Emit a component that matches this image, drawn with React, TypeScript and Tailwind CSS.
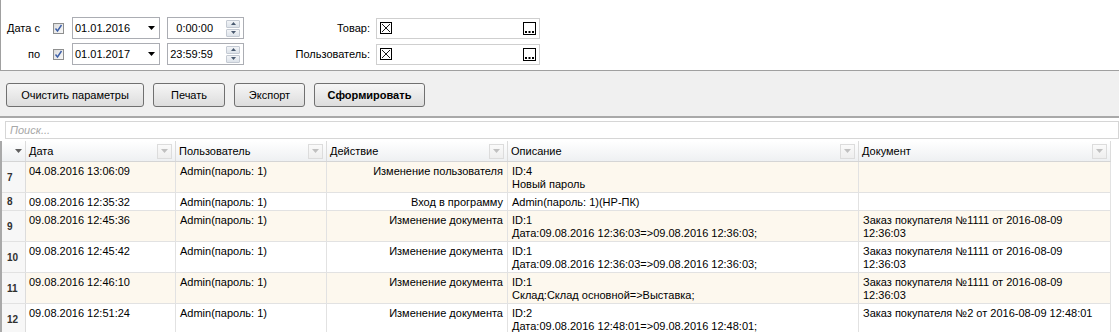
import React from "react";

const FONT = { fontFamily: '"Liberation Sans", Arial, sans-serif' };

const COLS = [
  { key: "date", title: "Дата", w: "w-[150px]" },
  { key: "user", title: "Пользователь", w: "w-[151px]" },
  { key: "action", title: "Действие", w: "w-[181px]" },
  { key: "desc", title: "Описание", w: "w-[351px]" },
  { key: "doc", title: "Документ", w: "w-[252px]" },
];

type Row = {
  n: number;
  date: string;
  user: string;
  action: string;
  desc: string[];
  doc: string[];
};

const DOC1111 = ["Заказ покупателя №1111 от 2016-08-09", "12:36:03"];

const ROWS: Row[] = [
  { n: 7, date: "04.08.2016 13:06:09", user: "Admin(пароль: 1)", action: "Изменение пользователя", desc: ["ID:4", "Новый пароль"], doc: [] },
  { n: 8, date: "09.08.2016 12:35:32", user: "Admin(пароль: 1)", action: "Вход в программу", desc: ["Admin(пароль: 1)(HP-ПК)"], doc: [] },
  { n: 9, date: "09.08.2016 12:45:36", user: "Admin(пароль: 1)", action: "Изменение документа", desc: ["ID:1", "Дата:09.08.2016 12:36:03=>09.08.2016 12:36:03;"], doc: DOC1111 },
  { n: 10, date: "09.08.2016 12:45:42", user: "Admin(пароль: 1)", action: "Изменение документа", desc: ["ID:1", "Дата:09.08.2016 12:36:03=>09.08.2016 12:36:03;"], doc: DOC1111 },
  { n: 11, date: "09.08.2016 12:46:10", user: "Admin(пароль: 1)", action: "Изменение документа", desc: ["ID:1", "Склад:Склад основной=>Выставка;"], doc: DOC1111 },
  { n: 12, date: "09.08.2016 12:51:24", user: "Admin(пароль: 1)", action: "Изменение документа", desc: ["ID:2", "Дата:09.08.2016 12:48:01=>09.08.2016 12:48:01;"], doc: ["Заказ покупателя №2 от 2016-08-09 12:48:01"] },
];

function Check() {
  return (
    <div className="flex h-[11px] w-[11px] items-center justify-center border border-[#8e8f8f] bg-gradient-to-br from-[#dcdcdc] to-[#f8f8f8]">
      <svg width="9" height="9" viewBox="0 0 9 9">
        <path d="M1.5 4.5 L3.5 7 L7.5 1" fill="none" stroke="#3c5fa8" strokeWidth="1.4" />
      </svg>
    </div>
  );
}

function DateBox({ value }: { value: string }) {
  return (
    <div className="flex h-[22px] w-[88px] items-center justify-between border border-[#abadb3] bg-white pl-[2px] pr-[4px]">
      <span>{value}</span>
      <svg width="7" height="4" viewBox="0 0 7 4">
        <path d="M0 0 H7 L3.5 4 Z" fill="#000" />
      </svg>
    </div>
  );
}

function TimeBox({ value }: { value: string }) {
  return (
    <div className="flex h-[22px] w-[77px] items-center border border-[#abadb3] bg-white pr-[3px]">
      <span className="flex-1 pr-[13px] text-right">{value}</span>
      <div className="flex flex-col gap-[1px]">
        <div className="flex h-[8px] w-[14px] items-center justify-center rounded-[1px] border border-[#c4cad3] bg-gradient-to-b from-[#f2f4f7] to-[#dde3ea]">
          <svg width="5" height="3" viewBox="0 0 5 3"><path d="M0 3 H5 L2.5 0 Z" fill="#4a5a70" /></svg>
        </div>
        <div className="flex h-[8px] w-[14px] items-center justify-center rounded-[1px] border border-[#c4cad3] bg-gradient-to-b from-[#f2f4f7] to-[#dde3ea]">
          <svg width="5" height="3" viewBox="0 0 5 3"><path d="M0 0 H5 L2.5 3 Z" fill="#4a5a70" /></svg>
        </div>
      </div>
    </div>
  );
}

function RefBox() {
  return (
    <div className="flex h-[21px] w-[164px] items-center justify-between border border-[#cfcfcf] bg-white pl-[3px] pr-[3px]">
      <div className="flex h-[12px] w-[12px] items-center justify-center border border-black">
        <svg width="10" height="10" viewBox="0 0 10 10">
          <path d="M1 1 L9 9 M9 1 L1 9" stroke="#000" strokeWidth="0.9" />
        </svg>
      </div>
      <div className="flex h-[13px] w-[13px] items-end justify-center border border-black pb-[1px]">
        <svg width="9" height="2" viewBox="0 0 9 2">
          <rect x="0" y="0" width="2" height="2" fill="#000" />
          <rect x="3.5" y="0" width="2" height="2" fill="#000" />
          <rect x="7" y="0" width="2" height="2" fill="#000" />
        </svg>
      </div>
    </div>
  );
}

function Btn({ label, w, bold }: { label: string; w: string; bold?: boolean }) {
  return (
    <div
      className={`flex h-[24px] ${w} items-center justify-center rounded-[3px] border border-[#707070] bg-gradient-to-b from-[#f6f6f6] to-[#dddddd] ${bold ? "font-bold" : ""}`}
    >
      {label}
    </div>
  );
}

function FilterBtn() {
  return (
    <div className="flex h-[15px] w-[15px] items-center justify-center border border-[#dcdcdc] bg-gradient-to-b from-[#fafafa] to-[#eeeeee]">
      <svg width="7" height="4" viewBox="0 0 7 4"><path d="M0 0 H7 L3.5 4 Z" fill="#c0c0c0" /></svg>
    </div>
  );
}

function Lines({ lines }: { lines: string[] }) {
  return (
    <>
      {lines.map((l, i) => (
        <div key={i} className="h-[13px] whitespace-nowrap leading-[13px]">{l}</div>
      ))}
    </>
  );
}

export default function App() {
  return (
    <div className="h-[332px] w-[1119px] overflow-hidden bg-white text-[11px] leading-[13px] text-black" style={FONT}>
      {/* parameters */}
      <div className="flex h-[71px] border-b border-l border-[#a0a0a0] bg-white pt-[17px]">
        <div className="flex flex-col gap-[4px]">
          <div className="flex h-[22px] items-center">
            <span className="w-[52px] pl-[6px]">Дата с</span>
            <Check />
            <div className="ml-[8px]"><DateBox value="01.01.2016" /></div>
            <div className="ml-[7px]"><TimeBox value="0:00:00" /></div>
          </div>
          <div className="flex h-[22px] items-center">
            <span className="w-[52px] pl-[27px]">по</span>
            <Check />
            <div className="ml-[8px]"><DateBox value="01.01.2017" /></div>
            <div className="ml-[7px]"><TimeBox value="23:59:59" /></div>
          </div>
        </div>
        <div className="ml-[40px] flex flex-col gap-[4px]">
          <div className="flex h-[22px] items-center">
            <span className="w-[92px] pr-[6px] text-right">Товар:</span>
            <RefBox />
          </div>
          <div className="flex h-[22px] items-center">
            <span className="w-[92px] pr-[6px] text-right">Пользователь:</span>
            <RefBox />
          </div>
        </div>
      </div>

      {/* toolbar */}
      <div className="flex h-[45px] gap-[9px] bg-[#f0f0f0] pl-[6px] pt-[12px]">
        <Btn label="Очистить параметры" w="w-[138px]" />
        <Btn label="Печать" w="w-[72px]" />
        <Btn label="Экспорт" w="w-[71px]" />
        <Btn label="Сформировать" w="w-[111px]" bold />
      </div>
      <div className="h-[2px] bg-[#a9a9a9]" />

      {/* search */}
      <div className="bg-white pb-[2px] pl-[5px] pt-[3px]">
        <div className="flex h-[18px] items-center border border-[#d6d6d6] pl-[4px] italic text-[#a8a8a8]">Поиск...</div>
      </div>

      {/* grid */}
      <div className="w-[1111px] border-l-2 border-[#a9a9a9]">
        <div className="flex h-[21px] border-b border-[#d5d5d5] bg-gradient-to-b from-[#ffffff] to-[#eef0f2]">
          <div className="flex w-[24px] items-center justify-end border-r border-[#dcdcdc] pr-[3px]">
            <svg width="7" height="4" viewBox="0 0 7 4"><path d="M0 0 H7 L3.5 4 Z" fill="#606060" /></svg>
          </div>
          {COLS.map((c) => (
            <div key={c.key} className={`flex ${c.w} items-center justify-between border-r border-[#dcdcdc] pl-[3px] pr-[3px]`}>
              <span>{c.title}</span>
              <FilterBtn />
            </div>
          ))}
        </div>
        {ROWS.map((r, i) => {
          const two = r.desc.length > 1;
          return (
            <div
              key={r.n}
              className={`flex ${two ? "h-[31px]" : "h-[18px]"} border-b border-[#e2e2e2] ${i % 2 === 0 ? "bg-[#fdf8ee]" : "bg-white"}`}
            >
              <div className="flex w-[24px] items-center border-r border-[#dcdcdc] bg-[#f7f7f7] pl-[5px] text-[10px] font-bold text-[#303030]">
                {r.n}
              </div>
              <div className="w-[150px] border-r border-[#e2e2e2] pl-[3px] pt-[3px]">
                <Lines lines={[r.date]} />
              </div>
              <div className="w-[151px] border-r border-[#e2e2e2] pl-[4px] pt-[3px]">
                <Lines lines={[r.user]} />
              </div>
              <div className="w-[181px] border-r border-[#e2e2e2] pr-[4px] pt-[3px] text-right">
                <Lines lines={[r.action]} />
              </div>
              <div className="w-[351px] border-r border-[#e2e2e2] pl-[4px] pt-[3px]">
                <Lines lines={r.desc} />
              </div>
              <div className="w-[252px] border-r border-[#e2e2e2] pl-[4px] pt-[3px]">
                <Lines lines={r.doc} />
              </div>
            </div>
          );
        })}
      </div>
    </div>
  );
}
